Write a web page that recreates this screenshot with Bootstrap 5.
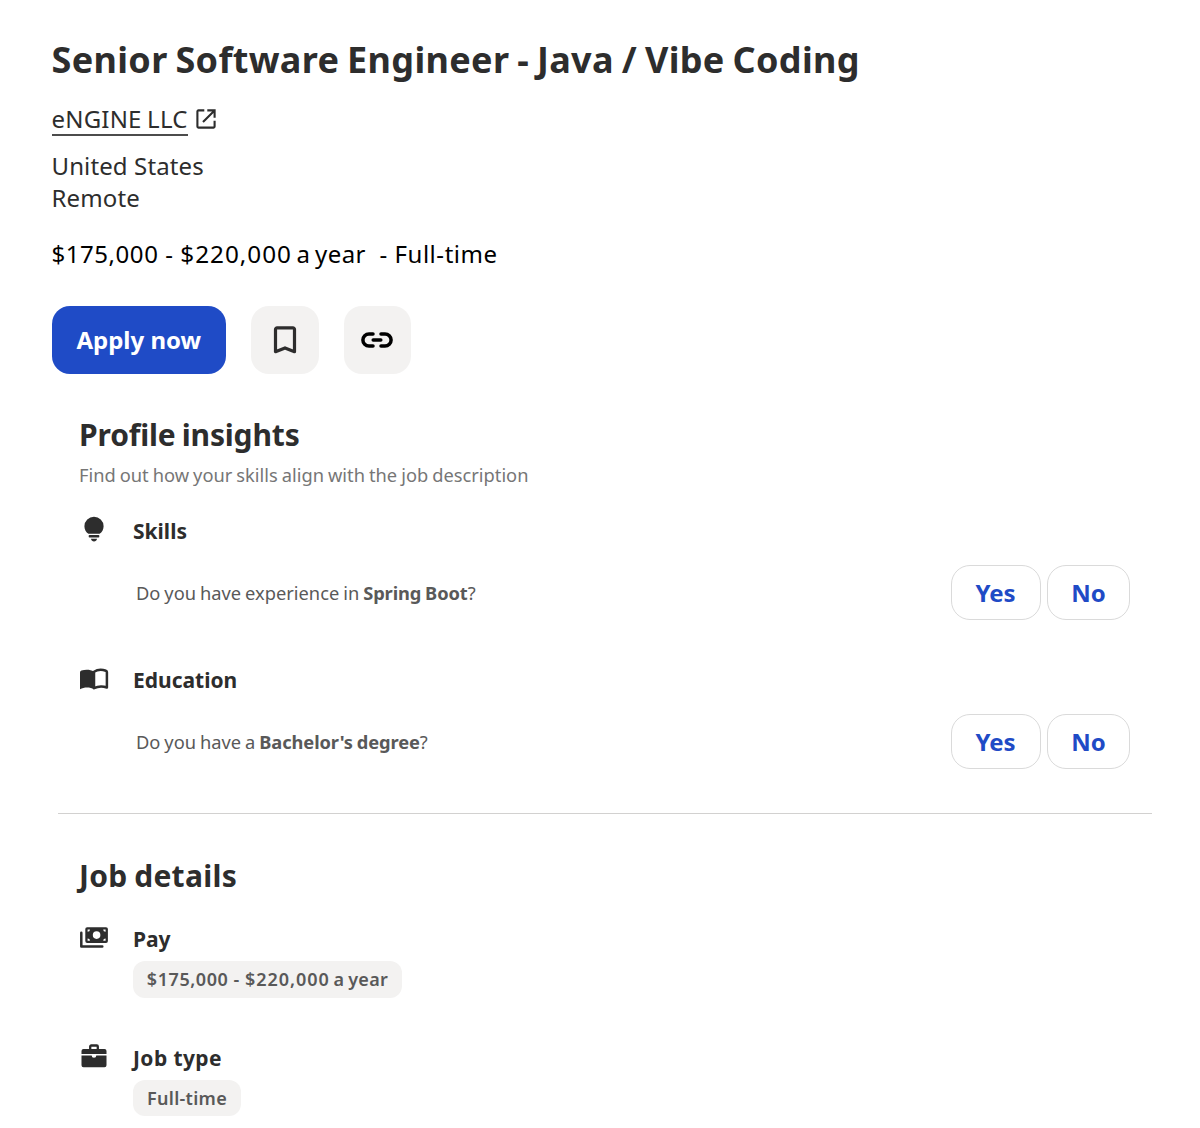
<!DOCTYPE html>
<html lang="en">
<head>
<meta charset="utf-8">
<meta name="viewport" content="width=device-width, initial-scale=1">
<title>Senior Software Engineer - Java / Vibe Coding</title>
<link href="https://cdn.jsdelivr.net/npm/bootstrap@5.3.0/dist/css/bootstrap.min.css" rel="stylesheet">
<style>
  body { font-family: "Noto Sans", "Open Sans", sans-serif; color: #2d2d2d; background: #fff; font-size: 24px; line-height: 32px; }
  svg { display: block; flex: none; }
  .job-page { padding: 36px 48px 0 51.5px; height: 1128px; overflow: hidden; }
  .job-title { font-size: 36px; line-height: 48px; font-weight: 700; letter-spacing: .33px; word-spacing: -1.8px; margin: 0 0 19px; }
  .company { height: 32px; gap: 8.5px; margin-bottom: 15px; }
  .company svg { margin-top: 6px; }
  .company-link { color: inherit; text-decoration: none; height: 32.5px; border-bottom: 2px solid #4c4c4c; letter-spacing: .2px; word-spacing: -1px; }
  .place { letter-spacing: .12px; }
  .salary { color: #000; margin: 24px 0 36px; letter-spacing: .55px; white-space: pre; }
  .salary .high { font-size: 24.3px; letter-spacing: .98px; }
  .salary .unit { word-spacing: -2px; letter-spacing: .4px; }
  .actions { gap: 25px; height: 68px; }
  .btn-apply { --bs-btn-bg: #1f4bc6; --bs-btn-color: #fff; --bs-btn-hover-bg: #173ea8; --bs-btn-hover-color: #fff;
    width: 174.5px; border: 0; border-radius: 18px; font-size: 24px; line-height: 32px; font-weight: 700; padding: 0; }
  .btn-tile { --bs-btn-bg: #f3f2f1; --bs-btn-hover-bg: #e8e6e4; width: 67.5px; border: 0; border-radius: 18px; padding: 0; }
  .panel { padding: 41px 22px 0 27.5px; }
  .panel-title { font-size: 30px; line-height: 40px; font-weight: 700; margin: 0; }
  .title-profile { letter-spacing: -.15px; word-spacing: -1.5px; }
  .title-details { letter-spacing: .3px; word-spacing: -1.5px; }
  .panel-note { font-size: 18.3px; line-height: 26px; color: #767676; margin: 7px 0 28px; word-spacing: -.75px; }
  .item-icon { width: 54px; flex: none; }
  .icon-book { margin-top: 2px; }
  .item-name { font-size: 21px; line-height: 30px; font-weight: 700; margin: 0; }
  .name-type { letter-spacing: .4px; }
  .question { font-size: 18.3px; line-height: 26px; color: #595959; padding-left: 57px; height: 55px; margin-top: 19px; word-spacing: -.8px; }
  .question strong { letter-spacing: -.1px; }
  .next-item { margin-top: 45px; }
  .answers { gap: 6.5px; word-spacing: 0; }
  .btn-answer { --bs-btn-color: #1f4bc6; --bs-btn-border-color: #dadada; --bs-btn-bg: #fff; --bs-btn-hover-color: #1f4bc6; --bs-btn-hover-bg: #f5f7fd; --bs-btn-hover-border-color: #d4d2d0;
    height: 55px; border-width: 1px; border-radius: 19px; font-size: 24px; line-height: 32px; font-weight: 700; padding: 0; }
  .btn-yes { width: 90px; } .btn-no { width: 83px; }
  .divider { margin: 44px 0 0 6px; height: 1px; background: #d2d1d0; }
  .panel-details { padding-top: 42px; }
  .pay-row { margin-top: 28px; }
  .chip { height: 36.5px; margin-top: 7px; background: #f3f2f1; color: #595959; border-radius: 12px; font-size: 18px; line-height: 37px; font-weight: 600; white-space: nowrap; text-align: center; }
  .chip-pay { width: 269px; letter-spacing: .55px; }
  .chip-pay .high { letter-spacing: .95px; }
  .chip-pay .unit { word-spacing: -1.2px; letter-spacing: .3px; }
  .chip-type { width: 108px; letter-spacing: .3px; }
  .type-row { margin-top: 45px; }
</style>
</head>
<body>
<main class="job-page">
  <h1 class="job-title">Senior Software Engineer - Java / Vibe Coding</h1>
  <div class="company d-flex">
    <a class="company-link" href="#">eNGINE LLC</a>
    <svg width="20" height="20" viewBox="0 0 20 20" fill="none" stroke="#2d2d2d" stroke-width="2.1"><path d="M8.300 1.400H2.400a1 1 0 0 0-1 1v15.200a1 1 0 0 0 1 1h15.200a1 1 0 0 0 1-1v-5.900M11.300 1.400h7.300v7.300M18.300 1.700 7 13"/></svg>
  </div>
  <div class="place">United States</div>
  <div class="place">Remote</div>
  <div class="salary">$175,000 - <span class="high">$220,000</span><span class="unit"> a year</span>  - Full-time</div>
  <div class="actions d-flex">
    <button class="btn btn-apply">Apply now</button>
    <button class="btn btn-tile d-flex align-items-center justify-content-center" aria-label="Save job">
      <svg width="24" height="28" viewBox="0 0 24 28" fill="none" stroke="#2d2d2d" stroke-width="3.2" stroke-linejoin="round"><path d="M4.100 1.900h15.800a1.600 1.600 0 0 1 1.600 1.600v22.200L12 21.900l-9.500 3.800V3.500a1.600 1.600 0 0 1 1.600-1.600z"/></svg>
    </button>
    <button class="btn btn-tile d-flex align-items-center justify-content-center" aria-label="Copy link">
      <svg width="32" height="16" viewBox="0 0 32 16" fill="none" stroke="#000" stroke-width="3.5" stroke-linecap="round"><path d="M12 1.900H8a6.100 6.100 0 0 0 0 12.200h4M20 1.900H24a6.100 6.100 0 0 1 0 12.200h-4M12.200 8h7.600"/></svg>
    </button>
  </div>

  <section class="panel">
    <h2 class="panel-title title-profile">Profile insights</h2>
    <p class="panel-note">Find out how your skills align with the job description</p>
    <div class="d-flex">
      <div class="item-icon"><svg width="30" height="28" viewBox="0 0 30 28" fill="#2d2d2d"><path d="M15 .7a9.600 9.600 0 0 1 9.600 9.500c0 3.300-1.600 5.900-4 7.600H9.400c-2.400-1.700-4-4.300-4-7.600A9.600 9.600 0 0 1 15 .7z"/><rect x="9.700" y="19" width="10.600" height="2.500" rx=".8"/><path d="M12 22.700h6c-.3 1.700-1.500 2.700-3 2.700s-2.700-1-3-2.700z"/></svg></div>
      <h3 class="item-name">Skills</h3>
    </div>
    <div class="question d-flex align-items-center justify-content-between">
      <div>Do you have experience in <strong>Spring Boot</strong>?</div>
      <div class="answers d-flex"><button class="btn btn-answer btn-yes">Yes</button><button class="btn btn-answer btn-no">No</button></div>
    </div>
    <div class="next-item d-flex">
      <div class="item-icon"><svg class="icon-book" width="30" height="28" viewBox="0 0 30 28"><path d="M1 5.500a2 2 0 0 1 1.400-1.900C6.600 2.200 11.300 2.400 15 4.700v17.600c-4-2.300-10-2.200-14 0z" fill="#2d2d2d"/><path d="M15 4.700c3.800-2.300 8.200-2.200 11.900-.9a1.400 1.400 0 0 1 1 1.300v15.400c-4-1.400-9-1.300-12.900.7z" fill="none" stroke="#2d2d2d" stroke-width="2.500" stroke-linejoin="round"/></svg></div>
      <h3 class="item-name">Education</h3>
    </div>
    <div class="question d-flex align-items-center justify-content-between">
      <div>Do you have a <strong>Bachelor's degree</strong>?</div>
      <div class="answers d-flex"><button class="btn btn-answer btn-yes">Yes</button><button class="btn btn-answer btn-no">No</button></div>
    </div>
  </section>

  <div class="divider"></div>

  <section class="panel panel-details">
    <h2 class="panel-title title-details">Job details</h2>
    <div class="pay-row d-flex">
      <div class="item-icon"><svg width="30" height="28" viewBox="0 0 30 28"><path fill="#2d2d2d" fill-rule="evenodd" d="M8.200 3.200h18.800a1.900 1.900 0 0 1 1.900 1.900v12a1.900 1.900 0 0 1-1.900 1.900H8.200a1.900 1.900 0 0 1-1.900-1.900v-12a1.900 1.900 0 0 1 1.900-1.900zM17.600 7.300a3.800 3.800 0 1 0 0 7.600 3.800 3.800 0 0 0 0-7.600zM8.600 5.400v2.400a2.400 2.400 0 0 0 2.400-2.400zM26.600 5.400v2.400a2.400 2.400 0 0 1-2.400-2.400zM8.600 16.800v-2.400a2.400 2.400 0 0 1 2.400 2.400zM26.600 16.800v-2.400a2.400 2.400 0 0 0-2.400 2.400z"/><path d="M2.300 8.800v13.700h21" fill="none" stroke="#2d2d2d" stroke-width="2.500" stroke-linecap="round" stroke-linejoin="round"/></svg></div>
      <div>
        <h3 class="item-name">Pay</h3>
        <div class="chip chip-pay">$175,000 - <span class="high">$220,000</span><span class="unit"> a year</span></div>
      </div>
    </div>
    <div class="type-row d-flex">
      <div class="item-icon"><svg width="30" height="28" viewBox="0 0 30 28"><path d="M11.200 7V3.500a1 1 0 0 1 1-1h5.600a1 1 0 0 1 1 1V7" fill="none" stroke="#2d2d2d" stroke-width="2.300"/><path fill="#2d2d2d" d="M4.500 5.900h21a2 2 0 0 1 2 2v3H2.500v-3a2 2 0 0 1 2-2zM2.500 12.500h10.200a2.300 2.300 0 0 0 4.600 0h10.200v9.700a2 2 0 0 1-2 2h-21a2 2 0 0 1-2-2z"/></svg></div>
      <div>
        <h3 class="item-name name-type">Job type</h3>
        <div class="chip chip-type">Full-time</div>
      </div>
    </div>
  </section>
</main>
<script src="https://cdn.jsdelivr.net/npm/bootstrap@5.3.0/dist/js/bootstrap.bundle.min.js"></script>
</body>
</html>
